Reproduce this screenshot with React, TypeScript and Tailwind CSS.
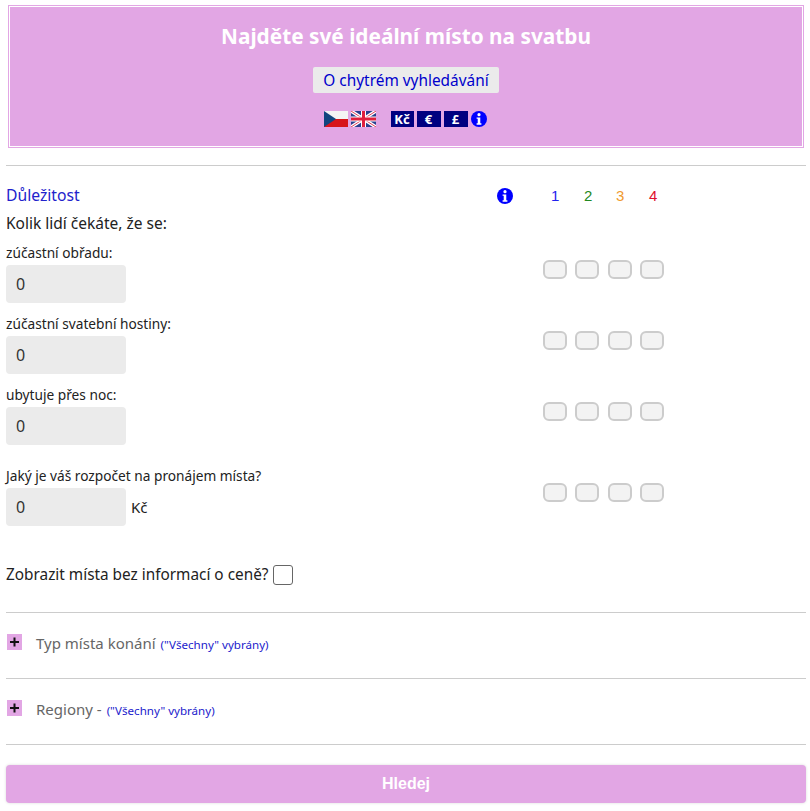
const font = { fontFamily: '"Noto Sans", sans-serif' };

function Info({ size = 17 }: { size?: number }) {
  return (
    <svg width={size} height={size} viewBox="0 0 20 20" className="block">
      <circle cx="10" cy="10" r="10" fill="#0000ff" />
      <circle cx="10" cy="4.6" r="2" fill="#fff" />
      <path d="M7 8h4.6v7.4H13v1.8H7v-1.8h1.4V9.8H7z" fill="#fff" />
    </svg>
  );
}

function CzFlag() {
  return (
    <svg width="24" height="16" viewBox="0 0 24 16" className="block">
      <rect width="24" height="8" fill="#f4f4f4" />
      <rect y="8" width="24" height="8" fill="#d7141a" />
      <path d="M0 0l12 8L0 16z" fill="#11457e" />
    </svg>
  );
}

function UkFlag() {
  return (
    <svg width="25" height="16" viewBox="0 0 25 16" className="block">
      <rect width="25" height="16" fill="#2a3f8f" />
      <path d="M0 0l25 16M25 0L0 16" stroke="#fff" strokeWidth="3.5" />
      <path d="M0 0l25 16M25 0L0 16" stroke="#e0405a" strokeWidth="1" />
      <path d="M12.5 0v16M0 8h25" stroke="#fff" strokeWidth="5" />
      <path d="M12.5 0v16M0 8h25" stroke="#e0203e" strokeWidth="3" />
    </svg>
  );
}

function Currency({ label, w }: { label: string; w: string }) {
  return (
    <span className={`flex h-4 ${w} items-center justify-center bg-[#000080] text-[13px] font-bold leading-none text-white`}>
      {label}
    </span>
  );
}

function Checks() {
  return (
    <div className="flex gap-[8.3px]">
      {[0, 1, 2, 3].map((i) => (
        <span key={i} className="h-[19px] w-[24px] rounded-[6px] border-2 border-[#cccccc] bg-[#f3f3f3]" />
      ))}
    </div>
  );
}

function Field({ label, top, suffix }: { label: string; top: string; suffix?: string }) {
  return (
    <div className="relative flex items-start">
      <div className="w-[537px]">
        <div className="h-[23px] text-[13.7px] leading-[22px] text-[#222]">{label}</div>
        <div className="flex items-center">
          <div className="flex h-[38px] w-[120px] items-center rounded-[4px] bg-[#ebebeb] pl-[10px] text-[16px] text-[#333]">0</div>
          {suffix && <span className="ml-[5px] text-[15px] text-[#222]">{suffix}</span>}
        </div>
      </div>
      <div className={top}>
        <Checks />
      </div>
    </div>
  );
}

function Accordion({ title, note }: { title: string; note: string }) {
  return (
    <div className="flex h-[65px] items-start pt-[20px]">
      <svg width="15" height="16" viewBox="0 0 15 16" className="ml-[1px] mt-[1px] block">
        <rect width="15" height="16" fill="#e2a6e4" />
        <path d="M3 8h9M7.5 3.5v9" stroke="#111" strokeWidth="2" />
      </svg>
      <span className="ml-[14px] text-[15px] leading-[20px] text-[#666]">{title}</span>
      <span className="ml-[5px] mt-[2px] text-[11.6px] leading-[20px] text-[#2222cc]">{note}</span>
    </div>
  );
}

export default function App() {
  return (
    <div className="h-[811px] overflow-hidden bg-white" style={font}>
      <div className="ml-[8px] mr-[6px] pt-[5px]">
        <div className="flex h-[143px] flex-col items-center border-[3px] border-double border-[#e2a6e4] bg-[#e2a6e4] bg-clip-padding">
          <h1 className="mt-[14px] text-[20.8px] font-bold leading-[28px] text-white">Najděte své ideální místo na svatbu</h1>
          <div className="mt-[17px] flex h-[26px] items-center rounded-[2px] bg-[#ebebeb] px-[10px] pt-[1px] text-[15.4px] text-[#0000cc]">O chytrém vyhledávání</div>
          <div className="-ml-[2px] mt-[18px] flex items-center">
            <CzFlag />
            <span className="ml-[3px]"><UkFlag /></span>
            <span className="ml-[15px]"><Currency label="Kč" w="w-[23px]" /></span>
            <span className="ml-[3px]"><Currency label="€" w="w-[24px]" /></span>
            <span className="ml-[3px]"><Currency label="£" w="w-[24px]" /></span>
            <span className="ml-[3px]"><Info size={16} /></span>
          </div>
        </div>
      </div>

      <div className="ml-[6px] mr-[4px] mt-[17px]">
        <hr className="border-[#cccccc]" />
        <div className="mt-[20px] flex h-[20px] items-center text-[15.7px]">
          <span className="w-[491px] text-[#2222cc]">Důležitost</span>
          <Info size={16} />
          <div className="ml-[38px] flex text-[15px]" style={{ fontFamily: '"Liberation Sans", sans-serif' }}>
            <span className="w-[33px] text-[#2222ee]">1</span>
            <span className="w-[32px] text-[#228822]">2</span>
            <span className="w-[33px] text-[#f09a30]">3</span>
            <span className="text-[#e01030]">4</span>
          </div>
        </div>
        <div className="mt-[7px] text-[15.5px] leading-[20px] text-[#222]">Kolik lidí čekáte, že se:</div>
        <div className="mt-[9px] flex flex-col gap-[10px]">
          <Field label="zúčastní obřadu:" top="mt-[18px]" />
          <Field label="zúčastní svatební hostiny:" top="mt-[18px]" />
          <Field label="ubytuje přes noc:" top="mt-[18px]" />
        </div>
        <div className="mt-[20px]">
          <Field label="Jaký je váš rozpočet na pronájem místa?" top="mt-[18px]" suffix="Kč" />
        </div>
        <div className="mt-[37px] flex items-center text-[15.35px] text-[#222]">
          <span>Zobrazit místa bez informací o ceně?</span>
          <span className="ml-[5px] h-[20px] w-[20px] rounded-[3px] border border-[#666]" />
        </div>
        <hr className="mt-[26px] border-[#cccccc]" />
        <Accordion title="Typ místa konání" note={'("Všechny" vybrány)'} />
        <hr className="border-[#cccccc]" />
        <Accordion title="Regiony -" note={'("Všechny" vybrány)'} />
        <hr className="border-[#cccccc]" />
        <button className="mt-[20px] h-[38px] w-full rounded-[4px] bg-[#e2a6e4] text-[16px] font-bold text-white shadow-[0_0_3px_rgba(0,0,0,0.15)]" style={{ fontFamily: '"Liberation Sans", sans-serif' }}>Hledej</button>
      </div>
    </div>
  );
}
